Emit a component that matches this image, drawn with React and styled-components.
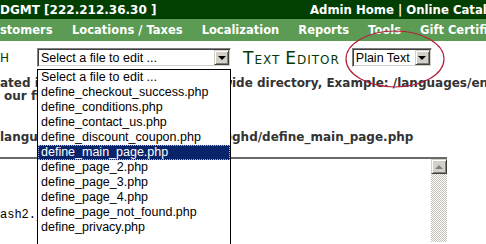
import React from 'react';
import styled, { createGlobalStyle } from 'styled-components';

const GlobalStyle = createGlobalStyle`
  html, body {
    margin: 0;
    padding: 0;
    background: #fff;
    overflow: hidden;
  }
`;

const files = [
  'Select a file to edit ...',
  'define_checkout_success.php',
  'define_conditions.php',
  'define_contact_us.php',
  'define_discount_coupon.php',
  'define_main_page.php',
  'define_page_2.php',
  'define_page_3.php',
  'define_page_4.php',
  'define_page_not_found.php',
  'define_privacy.php',
];

const navItems = ['stomers', 'Locations / Taxes', 'Localization', 'Reports', 'Tools', 'Gift Certificates'];

const Arrow = () => (
  <ArrowButton>
    <span />
  </ArrowButton>
);

const App = () => {
  return (
    <Page>
      <GlobalStyle />
      <TopBar>
        <Host>DGMT [222.212.36.30 ]</Host>
        <TopLinks>Admin Home | Online Catalog | Support Site</TopLinks>
      </TopBar>
      <NavBar>
        {navItems.map((item, i) => (
          <React.Fragment key={item}>
            {i > 0 && <NavSep />}
            <NavItem>{item}</NavItem>
          </React.Fragment>
        ))}
      </NavBar>

      <ToolRow>
        <Heading $w={25}>H</Heading>
        <Select $w={194}>
          <SelectText>Select a file to edit ...</SelectText>
          <Arrow />
        </Select>
        <Heading>
          <Big>T</Big>ext <Big>E</Big>ditor
        </Heading>
        <Select $w={80}>
          <SelectText>Plain Text</SelectText>
          <Arrow />
        </Select>
      </ToolRow>

      <Note>
        <NoteLine>
          <Clip>ated in the /includes/languages/ overr</Clip>
          <span>ide directory, Example: /languages/english/html_includes/</span>
        </NoteLine>
        <NoteLine>
          <Clip $indent={4}>our files.</Clip>
        </NoteLine>
        <NoteLine $gap={28}>
          <Clip>languages/english/html_includes/template_hi</Clip>
          <span>ghd/define_main_page.php</span>
        </NoteLine>
      </Note>

      <EditorBox>
        <Code>
          <CodeLine />
          <CodeLine />
          <CodeLine />
          <CodeLine>ash2.jpg" alt="" /&gt;</CodeLine>
        </Code>
        <Scrollbar>
          <ScrollButton>
            <span />
          </ScrollButton>
          <ScrollTrack />
        </Scrollbar>
      </EditorBox>

      <Popup>
        {files.map((f) => (
          <Option key={f} $active={f === 'define_main_page.php'}>
            {f}
          </Option>
        ))}
      </Popup>

      <Circle width="486" height="244" viewBox="0 0 486 244">
        <ellipse cx="395" cy="59" rx="49" ry="28" fill="none" stroke="#b4203c" strokeWidth="1.2" />
      </Circle>
    </Page>
  );
};

const Page = styled.div`
  position: relative;
  width: 486px;
  height: 244px;
  overflow: hidden;
  font-family: "DejaVu Sans", Verdana, sans-serif;
`;

const TopBar = styled.div`
  display: flex;
  align-items: center;
  height: 19px;
  background: #023f02;
  color: #fff;
  font-weight: bold;
  font-size: 12px;
  white-space: nowrap;
`;

const Host = styled.span`
  width: 310px;
  flex-shrink: 0;
`;

const TopLinks = styled.span`
  font-size: 11.7px;
`;

const NavBar = styled.nav`
  display: flex;
  align-items: center;
  height: 22px;
  background: #5b9b53;
  white-space: nowrap;
`;

const NavItem = styled.span`
  padding: 0 9.5px;
  color: #fff;
  font-weight: bold;
  font-size: 11.5px;

  &:first-child {
    padding-left: 0;
    padding-right: 10px;
  }
`;

const NavSep = styled.span`
  width: 1px;
  height: 14px;
  background: #2c6828;
`;

const ToolRow = styled.div`
  display: flex;
  align-items: center;
  gap: 12px;
  height: 19px;
  margin-top: 7px;
`;

const Heading = styled.div`
  width: ${(p) => (p.$w ? `${p.$w}px` : 'auto')};
  flex-shrink: 0;
  color: #073807;
  font-size: 12px;
  text-transform: uppercase;
  letter-spacing: 1px;
  white-space: nowrap;
`;

const Big = styled.span`
  font-size: 17px;
`;

const Select = styled.div`
  display: flex;
  align-items: center;
  width: ${(p) => p.$w}px;
  height: 19px;
  box-sizing: border-box;
  border: 1px solid;
  border-color: #808080 #fff #fff #808080;
  box-shadow: inset 1px 1px #404040, inset -1px -1px #d4d0c8;
  background: #fff;
  padding: 1px;
`;

const SelectText = styled.span`
  flex: 1;
  padding-left: 2px;
  font-family: "Liberation Sans", Arial, sans-serif;
  font-size: 12.5px;
  color: #000;
  white-space: nowrap;
  overflow: hidden;
`;

const ArrowButton = styled.span`
  display: flex;
  align-items: center;
  justify-content: center;
  width: 15px;
  height: 15px;
  box-sizing: border-box;
  background: #d4d0c8;
  border: 1px solid;
  border-color: #d4d0c8 #404040 #404040 #d4d0c8;
  box-shadow: inset 1px 1px #fff, inset -1px -1px #808080;

  span {
    width: 0;
    height: 0;
    border-left: 4px solid transparent;
    border-right: 4px solid transparent;
    border-top: 4px solid #000;
  }
`;

const Note = styled.div`
  margin-top: 10px;
  font-weight: bold;
  font-size: 12px;
  line-height: 13px;
  color: #333;
`;

const NoteLine = styled.div`
  display: grid;
  grid-template-columns: 232px auto;
  white-space: nowrap;
  margin-top: ${(p) => (p.$gap ? `${p.$gap}px` : '0')};
`;

const Clip = styled.span`
  overflow: hidden;
  padding-left: ${(p) => (p.$indent ? `${p.$indent}px` : '0')};
`;

const EditorBox = styled.section`
  position: relative;
  z-index: 1;
  display: flex;
  width: 447px;
  height: 92px;
  margin-top: 13px;
  border-top: 2px solid #6a6a6a;
  background: #fff;
`;

const Code = styled.div`
  flex: 1;
  padding-top: 4px;
  font-family: "Liberation Mono", "Courier New", monospace;
  font-size: 12px;
  color: #000;
  white-space: pre;
`;

const CodeLine = styled.div`
  height: 15px;
  line-height: 15px;
`;

const Scrollbar = styled.div`
  display: flex;
  flex-direction: column;
  width: 16px;
`;

const ScrollButton = styled.div`
  display: flex;
  align-items: center;
  justify-content: center;
  height: 15px;
  box-sizing: border-box;
  background: #d4d0c8;
  border: 1px solid;
  border-color: #d4d0c8 #404040 #404040 #d4d0c8;
  box-shadow: inset 1px 1px #fff, inset -1px -1px #808080;

  span {
    width: 0;
    height: 0;
    border-left: 4px solid transparent;
    border-right: 4px solid transparent;
    border-bottom: 4px solid #808080;
  }
`;

const ScrollTrack = styled.div`
  height: 68px;
  background-color: #fff;
  background-image: repeating-conic-gradient(#c4c0b8 0 25%, #fff 0 50%);
  background-size: 2px 2px;
`;

const Popup = styled.div`
  position: absolute;
  z-index: 2;
  left: 37px;
  top: 69px;
  width: 194px;
  height: 190px;
  box-sizing: border-box;
  border: 1px solid #000;
  background: #fff;
  font-family: "Liberation Sans", Arial, sans-serif;
  font-size: 12.5px;
`;

const Option = styled.div`
  height: 15px;
  line-height: 15px;
  padding-left: 3px;
  white-space: nowrap;
  color: ${(p) => (p.$active ? '#fff' : '#000')};
  background: ${(p) => (p.$active ? '#0a246a' : 'transparent')};
  outline: ${(p) => (p.$active ? '1px dotted #a8b4d8' : 'none')};
  outline-offset: -1px;
`;

const Circle = styled.svg`
  position: absolute;
  z-index: 3;
  left: 0;
  top: 0;
  pointer-events: none;
`;

export default App;
